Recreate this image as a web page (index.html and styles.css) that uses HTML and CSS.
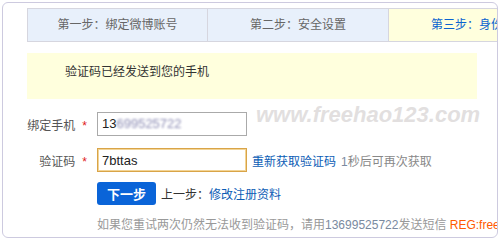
FILE: index.html
```html
<!DOCTYPE html>
<html lang="zh-CN">
<head>
    <meta charset="UTF-8">
    <title>身份验证</title>
    <link rel="stylesheet" href="styles.css">
</head>
<body>
    <div class="frame">
        <div class="steps">
            <div class="step">第一步：绑定微博账号</div>
            <div class="step">第二步：安全设置</div>
            <div class="step current">第三步：身份验证</div>
        </div>
        <div class="notice">验证码已经发送到您的手机</div>
        <div class="watermark">www.freehao123.com</div>
        <div class="form">
            <div class="row">
                <label class="label">绑定手机<span class="star">*</span></label>
                <div class="field">13<span class="blur">699525722</span></div>
            </div>
            <div class="row row-code">
                <label class="label">验证码<span class="star">*</span></label>
                <input class="field focus" type="text" value="7bttas">
                <a href="#" class="link resend">重新获取验证码</a>
                <span class="hint"><span class="num">1</span>秒后可再次获取</span>
            </div>
            <div class="row row-actions">
                <button class="next">下一步</button>
                <span class="prev">上一步：<a href="#" class="link">修改注册资料</a></span>
            </div>
            <p class="help">
                如果您重试两次仍然无法收到验证码，请用<span class="num">13699525722</span>发送短信 <span class="reg">REG:freehao123</span>
            </p>
        </div>
    </div>
</body>
</html>
```

FILE: styles.css
```css
body {
    margin: 0;
    font-family: "Liberation Sans", "Noto Sans CJK SC", sans-serif;
    font-size: 12px;
    color: #333;
    background: #fff;
}
.frame {
    position: relative;
    margin: 2px;
    width: 496px;
    height: 236px;
    box-sizing: border-box;
    border: 1px solid #cdcadf;
    border-radius: 6px;
    overflow: hidden;
    padding: 5px 0 0 24px;
}
.steps {
    display: flex;
    width: 600px;
}
.step {
    flex: 0 0 181px;
    height: 34px;
    box-sizing: border-box;
    border: 1px solid #d6d6df;
    border-left: none;
    background: #e8f0fb;
    color: #666;
    text-align: center;
    line-height: 32px;
}
.step:first-child {
    border-left: 1px solid #d6d6df;
}
.step.current {
    background: #ffffdd;
    color: #0a64d0;
}
.notice {
    margin-top: 11px;
    width: 450px;
    height: 46px;
    box-sizing: border-box;
    background: #ffffdd;
    padding: 10px 0 0 38px;
    line-height: 18px;
}
.watermark {
    position: absolute;
    left: 253px;
    top: 99px;
    font-size: 22px;
    font-weight: bold;
    font-style: italic;
    color: #e2dfdf;
    white-space: nowrap;
}
.form {
    margin-left: -24px;
    padding-top: 13px;
}
.row {
    display: flex;
    align-items: center;
    white-space: nowrap;
}
.row + .row {
    margin-top: 12px;
}
.label {
    width: 94px;
    box-sizing: border-box;
    padding-right: 10px;
    text-align: right;
    color: #555;
}
.star {
    color: #e02020;
    margin-left: 7px;
}
.field {
    width: 150px;
    height: 24px;
    box-sizing: border-box;
    margin: 0;
    padding: 0 4px;
    border: 1px solid #aaa;
    font-family: "Liberation Sans", sans-serif;
    font-size: 13px;
    line-height: 22px;
    color: #222;
    background: #fff;
    outline: none;
}
.field.focus {
    border-color: #d9a448;
    box-shadow: inset 0 0 0 1px #f2d496;
}
.blur {
    color: #8c8cb4;
    filter: blur(1.2px);
}
.link {
    color: #0b5cb5;
    text-decoration: none;
}
.resend {
    margin-left: 5px;
}
.hint {
    margin-left: 5px;
    color: #888;
}
.num {
    color: #7a8aa0;
}
.row-actions {
    margin-top: 10px !important;
    padding-left: 94px;
}
.next {
    width: 59px;
    height: 23px;
    border: none;
    border-radius: 3px;
    background: #0a64d8;
    color: #fff;
    font-family: "Noto Sans CJK SC", sans-serif;
    font-size: 13px;
    font-weight: bold;
    padding: 0;
}
.prev {
    margin-left: 5px;
    color: #333;
}
.help {
    margin: 11px 0 0;
    padding-left: 94px;
    line-height: 18px;
    color: #999;
    white-space: nowrap;
}
.reg {
    color: #ff5a00;
}
```
